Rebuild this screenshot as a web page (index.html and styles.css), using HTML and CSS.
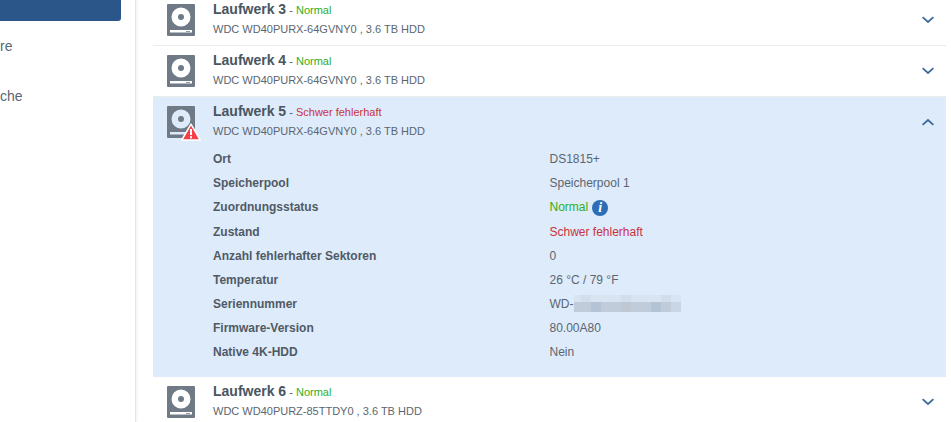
FILE: index.html
```html
<!DOCTYPE html>
<html lang="de">
<head>
<meta charset="utf-8">
<title>Laufwerke</title>
<link rel="stylesheet" href="styles.css">
</head>
<body>
<svg class="defs" width="0" height="0" aria-hidden="true">
  <symbol id="hdd" viewBox="0 0 28 32">
    <path fill="#6f7a86" fill-rule="evenodd" d="M1 0h26a1 1 0 0 1 1 1v30a1 1 0 0 1-1 1H1a1 1 0 0 1-1-1V1a1 1 0 0 1 1-1zM14 3.500a9.500 9.500 0 1 0 0 19 9.500 9.500 0 0 0 0-19zM14 10a3 3 0 1 1 0 6 3 3 0 0 1 0-6zM3 26v2.500h22v-2.500zM19 27h4v.8h-4z"/>
  </symbol>
  <symbol id="chev-down" viewBox="0 0 12 8">
    <path fill="none" stroke="#3d6a9e" stroke-width="1.800" d="M.6 1.200l5.400 4.800 5.400-4.800"/>
  </symbol>
  <symbol id="chev-up" viewBox="0 0 12 8">
    <path fill="none" stroke="#3d6a9e" stroke-width="1.800" d="M.6 6.800l5.400-4.800 5.400 4.800"/>
  </symbol>
</svg>
<div class="page">
  <aside class="sidebar">
    <div class="nav-active"></div>
    <div class="nav-item">re</div>
    <div class="nav-item">che</div>
  </aside>
  <main class="list">
    <section class="row">
      <svg class="hdd"><use href="#hdd"/></svg>
      <div class="info">
        <div class="title"><b>Laufwerk 3</b> <span class="dash">-</span> <span class="ok">Normal</span></div>
        <div class="model">WDC WD40PURX-64GVNY0 , 3.6 TB HDD</div>
      </div>
      <svg class="chev"><use href="#chev-down"/></svg>
    </section>
    <section class="row">
      <svg class="hdd"><use href="#hdd"/></svg>
      <div class="info">
        <div class="title"><b>Laufwerk 4</b> <span class="dash">-</span> <span class="ok">Normal</span></div>
        <div class="model">WDC WD40PURX-64GVNY0 , 3.6 TB HDD</div>
      </div>
      <svg class="chev"><use href="#chev-down"/></svg>
    </section>
    <section class="row row-open">
      <div class="row-head">
        <div class="hdd-wrap">
          <svg class="hdd"><use href="#hdd"/></svg>
          <svg class="warn" viewBox="0 0 20 18"><path fill="#f33f46" stroke="#fff" stroke-width="1.500" stroke-linejoin="round" d="M10 1.200L19.200 17H.8z"/><path fill="#fff" d="M9 6h2v6H9zM9 13.200h2v2H9z"/></svg>
        </div>
        <div class="info">
          <div class="title"><b>Laufwerk 5</b> <span class="dash">-</span> <span class="bad">Schwer fehlerhaft</span></div>
          <div class="model">WDC WD40PURX-64GVNY0 , 3.6 TB HDD</div>
        </div>
        <svg class="chev"><use href="#chev-up"/></svg>
      </div>
      <dl class="details">
        <dt>Ort</dt><dd>DS1815+</dd>
        <dt>Speicherpool</dt><dd>Speicherpool 1</dd>
        <dt>Zuordnungsstatus</dt><dd><span class="ok">Normal</span><span class="info-icon">i</span></dd>
        <dt>Zustand</dt><dd class="bad">Schwer fehlerhaft</dd>
        <dt>Anzahl fehlerhafter Sektoren</dt><dd>0</dd>
        <dt>Temperatur</dt><dd>26 °C / 79 °F</dd>
        <dt>Seriennummer</dt><dd class="serial">WD-<span class="blur"><i></i><i></i><i></i><i></i><i></i><i></i><i></i><i></i><i></i><i></i><i></i><i></i><i></i><i></i><i></i><i></i><i></i><i></i><i></i><i></i><i></i><i></i></span></dd>
        <dt>Firmware-Version</dt><dd>80.00A80</dd>
        <dt>Native 4K-HDD</dt><dd>Nein</dd>
      </dl>
    </section>
    <section class="row">
      <svg class="hdd"><use href="#hdd"/></svg>
      <div class="info">
        <div class="title"><b>Laufwerk 6</b> <span class="dash">-</span> <span class="ok">Normal</span></div>
        <div class="model">WDC WD40PURZ-85TTDY0 , 3.6 TB HDD</div>
      </div>
      <svg class="chev"><use href="#chev-down"/></svg>
    </section>
  </main>
</div>
</body>
</html>
```
FILE: styles.css
```css
html, body {
  margin: 0;
  height: 100%;
  overflow: hidden;
  background: #fff;
}
body {
  font-family: "Liberation Sans", Arial, sans-serif;
  color: #505a64;
}
.defs { display: block; height: 0; }
.page {
  display: flex;
  height: 422px;
  overflow: hidden;
}
.sidebar {
  width: 136px;
  flex: none;
  box-sizing: border-box;
  border-right: 1px solid #e6e6e6;
  box-shadow: 1px 0 2px rgba(0,0,0,.06);
  font-size: 14px;
}
.nav-active {
  width: 121px;
  height: 21px;
  background: #2b5689;
  border-radius: 0 0 3px 0;
}
.nav-item {
  height: 50px;
  line-height: 50px;
  color: #5b6670;
}
.list {
  width: 793px;
  margin-left: 17px;
  flex: none;
  margin-top: -5px;
}
.row {
  display: flex;
  height: 50px;
  border-bottom: 1px solid #ececec;
}
.row-head { display: flex; width: 100%; height: 50px; }
.row-open {
  display: block;
  height: 280px;
  border-bottom: 0;
  background: #deebfb;
}
.hdd {
  width: 28px;
  height: 32px;
  flex: none;
  margin: 9px 0 0 14px;
}
.hdd-wrap {
  position: relative;
  width: 42px;
  height: 50px;
  flex: none;
}
.warn {
  position: absolute;
  left: 28px;
  top: 26px;
  width: 20px;
  height: 18px;
}
.info {
  margin-left: 18px;
  flex: 1;
}
.title {
  font-size: 11px;
  line-height: 16px;
  margin-top: 6px;
}
.title b {
  font-size: 14px;
  color: #4a5560;
}
.dash { color: #505a64; }
.ok { color: #2fae1c; }
.bad { color: #c8323c; }
.model {
  font-size: 11px;
  line-height: 14px;
  margin-top: 4px;
  color: #5b6670;
}
.chev {
  width: 12px;
  height: 8px;
  flex: none;
  margin: 21px 12px 0 0;
}
.details {
  display: grid;
  grid-template-columns: 336.5px 1fr;
  grid-auto-rows: 24.1px;
  margin: 0 0 0 60px;
  padding-top: .25px;
  font-size: 12px;
  line-height: 24px;
}
.details dt { font-weight: bold; color: #505a64; }
.details dd { margin: 0; color: #5b6670; }
.details dd.bad { color: #c8323c; }
.info-icon {
  display: inline-block;
  vertical-align: middle;
  width: 16px;
  height: 16px;
  margin: -1px 0 0 4px;
  border-radius: 50%;
  background: #2c6db5;
  color: #fff;
  font: italic bold 14px/16px "Liberation Serif", serif;
  text-align: center;
}
.serial { display: flex; align-items: center; }
.blur {
  display: grid;
  grid-template-columns: 7px repeat(10, 10px);
  grid-template-rows: 7px 10px;
  width: 107px;
}
.blur i { background: #d8e4f2; }
.blur i:nth-child(4n+2) { background: #d2deec; }
.blur i:nth-child(n+12) { background: #c0ccda; }
.blur i:nth-child(3n+14) { background: #b4c3d6; }
.blur i:nth-child(17) { background: #c2c8d2; }
.blur i:nth-child(22) { background: #c9d6e5; }
```
